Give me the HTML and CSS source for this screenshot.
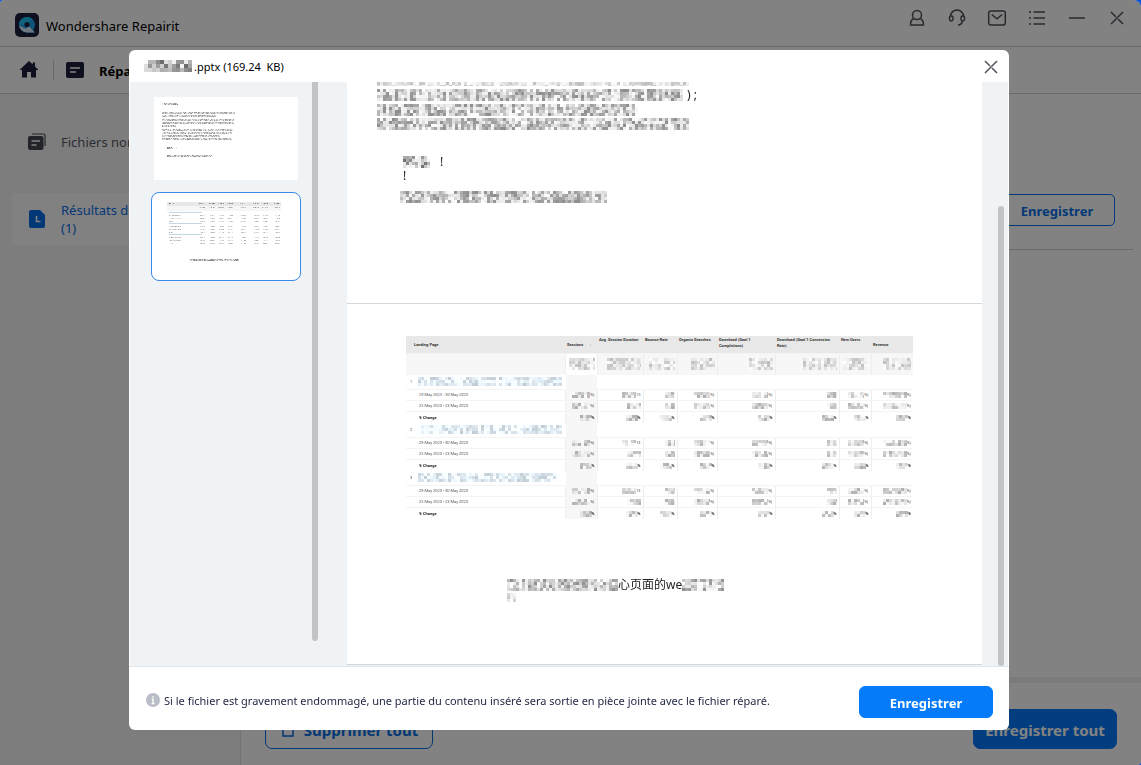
FILE: index.html
```html
<!DOCTYPE html>
<html lang="fr">
<head>
<meta charset="utf-8">
<meta name="viewport" content="width=device-width, initial-scale=1">
<title>Wondershare Repairit</title>
<link rel="stylesheet" href="styles.css">
</head>
<body>
<div class="app">
  <header class="titlebar">
    <svg class="logo" viewBox="0 0 24 24" aria-hidden="true">
      <rect width="24" height="24" rx="5" fill="#1d2040"/>
      <path d="M4 12a8 8 0 1 1 14.200 5l1.600 2.400H12A8 8 0 0 1 4 12z" fill="#1aa5e8"/>
      <path d="M4 12.500a8 8 0 0 0 8 6.900h7.800l-5.800-6.200-3 2.600z" fill="#d5ecff"/>
      <path d="M4 11.500a8 8 0 0 1 13-5.700L12 12z" fill="#1fc4f2"/>
      <circle cx="12" cy="11.500" r="2.600" fill="#1d2040"/>
    </svg>
    <span class="app-name">Wondershare Repairit</span>
    <div class="window-tools">
      <button class="tool" aria-label="Compte"><svg viewBox="0 0 20 20"><circle cx="10" cy="7" r="4.500"/><path d="M6.500 10.500C4.500 11.800 3.500 13.500 3.500 17h13c0-3.500-1-5.200-3-6.500"/></svg></button>
      <button class="tool" aria-label="Assistance"><svg viewBox="0 0 20 20"><path d="M3.500 9V8.500a6.500 6.500 0 0 1 13 0V9M15.500 13c-.5 2.500-2 4-4.500 4"/><rect x="2.500" y="8" width="3.500" height="5" rx="1.700"/><rect x="14" y="8" width="3.500" height="5" rx="1.700"/></svg></button>
      <button class="tool" aria-label="Messages"><svg viewBox="0 0 20 20"><rect x="1.700" y="3" width="16.600" height="14" rx="2"/><path d="M4.800 6.500 10 10.800l5.200-4.300"/></svg></button>
      <button class="tool" aria-label="Menu"><svg viewBox="0 0 20 20"><path d="M6.500 4H18M6.500 10H18M6.500 16H18M2 4h2M2 10h2M2 16h2"/></svg></button>
      <button class="tool" aria-label="Réduire"><svg viewBox="0 0 20 20"><path d="M2 10h16"/></svg></button>
      <button class="tool" aria-label="Fermer"><svg viewBox="0 0 20 20"><path d="m4 4 5 5M11 11l5 5M16 4 4 16"/></svg></button>
    </div>
  </header>

  <nav class="crumbs">
    <svg class="home" viewBox="0 0 20 20" aria-hidden="true"><path d="M10 1 .5 10H3v7.500h5V12h4v5.500h5V10h2.500L16 6.600V2.500h-2.300v2z"/></svg>
    <span class="crumb-rule"></span>
    <svg class="doc" viewBox="0 0 18 16" aria-hidden="true"><rect width="18" height="16" rx="2"/><path d="M4 6h10M4 10h6" stroke="#fff" stroke-width="1.500"/></svg>
    <strong class="crumb">Réparation de fichiers</strong>
  </nav>

  <div class="workspace">
    <aside class="sidebar">
      <a class="side-item" href="#">
        <svg class="side-icon" viewBox="0 0 18 18" aria-hidden="true"><path d="M4 1h11.500A1.500 1.500 0 0 1 17 2.500V13" fill="none" stroke="#444852" stroke-width="1.200"/><rect x="0" y="3" width="15.500" height="14" rx="2" fill="#444852"/><path d="M3.500 8h8.500M3.500 12h5" stroke="#fff" stroke-width="1.400"/></svg>
        <span>Fichiers non réparés</span>
      </a>
      <a class="side-item side-item-active" href="#">
        <svg class="side-icon" viewBox="0 0 18 20" aria-hidden="true"><path d="M3 1h9l5 5v11a2 2 0 0 1-2 2H3a2 2 0 0 1-2-2V3a2 2 0 0 1 2-2z" fill="#066fe8"/><path d="M8.500 7v5.500h4" fill="none" stroke="#fff" stroke-width="1.600"/></svg>
        <span>Résultats de réparation<br>(1)</span>
      </a>
    </aside>
    <main class="results">
      <section class="result-list">
        <div class="result-row"><button class="btn btn-outline">Enregistrer</button></div>
      </section>
      <footer class="actions">
        <button class="btn btn-outline btn-large btn-delete">
          <svg class="trash" viewBox="0 0 16 16" aria-hidden="true"><path d="M1 4h14M5 4V1h6v3M3 4v10h10V4"/></svg>Supprimer tout
        </button>
        <button class="btn btn-primary btn-large">Enregistrer tout</button>
      </footer>
    </main>
  </div>

  <div class="overlay">
    <section class="modal" role="dialog" aria-modal="true" aria-labelledby="file-name">
      <header class="modal-head">
        <h1 class="file-name" id="file-name"><canvas class="mosaic" width="48" height="12" data-cell="4" data-dark="100"></canvas>.pptx (169.24 &nbsp;KB)</h1>
        <button class="tool" aria-label="Fermer l'aperçu"><svg viewBox="0 0 20 20"><path d="m4 4 5 5M11 11l5 5M16 4 4 16"/></svg></button>
      </header>
      <div class="preview">
        <div class="thumbs">
          <button class="thumb" aria-label="Page 1"><canvas id="thumb-1" width="144" height="83"></canvas></button>
          <button class="thumb thumb-active" aria-label="Page 2"><canvas id="thumb-2" width="144" height="83"></canvas></button>
        </div>
        <div class="thumb-bar"></div>
        <div class="pages">
          <article class="page page-one">
            <div class="lines">
              <canvas class="mosaic" width="312" height="4" data-dark="190"></canvas>
              <div class="line"><canvas class="mosaic" width="306" height="12"></canvas><span class="tail">) ;</span></div>
              <canvas class="mosaic" width="261" height="12"></canvas>
              <canvas class="mosaic" width="312" height="12"></canvas>
            </div>
            <div class="note">
              <div class="line"><canvas class="mosaic" width="27" height="12" data-dark="110"></canvas><span class="bang">!</span></div>
              <div class="line"><span>!</span></div>
            </div>
            <div class="closing"><canvas class="mosaic" width="207" height="12"></canvas></div>
          </article>
          <article class="page page-two">
            <table class="stats">
              <colgroup><col class="c-page"><col class="c-sessions"><col class="c-avg"><col class="c-bounce"><col class="c-organic"><col class="c-goal"><col class="c-rate"><col class="c-new"><col class="c-revenue"></colgroup>
              <thead>
                <tr>
                  <th class="mid">Landing Page</th>
                  <th class="mid sort">Sessions <span>↓</span></th>
                  <th>Avg. Session Duration</th>
                  <th>Bounce Rate</th>
                  <th>Organic Searches</th>
                  <th>Download (Goal 1<br>Completions)</th>
                  <th>Download (Goal 1 Conversion<br>Rate)</th>
                  <th>New Users</th>
                  <th class="mid">Revenue</th>
                </tr>
              </thead>
              <tbody id="stats-body"></tbody>
            </table>
            <div class="caption">
              <canvas class="mosaic" width="111" height="12"></canvas><span>心页面的we</span><canvas class="mosaic" width="42" height="12"></canvas>
            </div>
            <canvas class="mosaic caption-tail" width="9" height="9" data-dark="190"></canvas>
          </article>
        </div>
        <div class="page-bar"></div>
      </div>
      <footer class="modal-foot">
        <svg class="info" viewBox="0 0 14 14" aria-hidden="true"><circle cx="7" cy="7" r="7" fill="#b9bdc7"/><path d="M7 3v1.600M5.800 6H7v4.500M5.500 10.500h3" stroke="#fff" stroke-width="1.300" fill="none"/></svg>
        <p class="hint">Si le fichier est gravement endommagé, une partie du contenu inséré sera sortie en pièce jointe avec le fichier réparé.</p>
        <button class="btn btn-primary btn-save">Enregistrer</button>
      </footer>
    </section>
  </div>
</div>
<script src="script.js"></script>
</body>
</html>
```

FILE: styles.css
```css
* { box-sizing: border-box; }
body {
  margin: 0;
  background: #0a55e0;
  color: #000;
  font-family: "Noto Sans", "Noto Sans CJK SC", sans-serif;
  font-size: 13px;
}
button { font-family: inherit; padding: 0; cursor: pointer; }
canvas { display: block; }

.app {
  position: relative;
  display: flex;
  flex-direction: column;
  min-height: 100vh;
  overflow: hidden;
  border-radius: 4px 8px 4px 0;
  background: #fff;
}

/* Title bar */
.titlebar {
  display: flex;
  align-items: center;
  height: 47px;
  padding: 4px 14px 0 15px;
  border-bottom: 1px solid #ced1da;
}
.logo { width: 24px; height: 24px; }
.app-name { margin-left: 7px; padding-top: 2px; font-size: 13px; }
.window-tools { display: flex; gap: 20px; margin: 0 0 14px auto; }
.tool {
  width: 20px;
  height: 20px;
  border: 0;
  background: none;
}
.tool svg {
  display: block;
  width: 20px;
  height: 20px;
  fill: none;
  stroke: #50535c;
  stroke-width: 1.5;
}

/* Navigation */
.crumbs {
  display: flex;
  align-items: center;
  height: 47px;
  padding-left: 19px;
  border-bottom: 1px solid #ced1da;
}
.home { width: 20px; height: 20px; fill: #1d2040; }
.crumb-rule { width: 1px; height: 20px; margin: 0 12px 0 14px; background: #ced1da; }
.doc { width: 18px; height: 16px; fill: #1d2040; }
.crumb { margin-left: 15px; padding-top: 2px; font-size: 13px; }

/* Workspace */
.workspace { display: flex; flex: 1; }
.sidebar {
  width: 241px;
  padding: 22px 12px;
  border-right: 1px solid #dfe1e8;
  background: #f5f5f8;
}
.side-item {
  display: flex;
  align-items: center;
  gap: 15px;
  height: 52px;
  margin-bottom: 25px;
  padding-left: 16px;
  border-radius: 4px;
  color: #585b65;
  line-height: 18px;
  text-decoration: none;
  white-space: nowrap;
}
.side-item-active { background: #fdfdff; color: #066fe8; }
.side-icon { width: 18px; height: 20px; }
.results { display: flex; flex: 1; flex-direction: column; }
.result-list { flex: 1; padding: 77px 8px 0 24px; }
.result-row {
  display: flex;
  align-items: center;
  justify-content: flex-end;
  height: 79px;
  padding-right: 18px;
  border-bottom: 1px solid #ced1da;
}
.actions {
  display: flex;
  justify-content: space-between;
  padding: 26px 24px 16px;
  border-top: 6px solid #f2f2f8;
}

/* Buttons */
.btn {
  width: 116px;
  height: 32px;
  padding-top: 2px;
  border: 1px solid #066fe8;
  border-radius: 5px;
  font-size: 13px;
  font-weight: 700;
}
.btn-outline { background: transparent; color: #066fe8; }
.btn-primary { border-color: #057bfa; background: #057bfa; color: #fff; }
.btn-large { width: 144px; height: 40px; border-radius: 7px; font-size: 15px; }
.btn-delete { display: flex; align-items: center; justify-content: center; gap: 8px; width: 168px; }
.trash { width: 16px; height: 16px; fill: none; stroke: #066fe8; stroke-width: 1.5; }
.btn-save { width: 134px; margin-left: auto; border-radius: 6px; }

/* Preview dialog */
.overlay {
  position: absolute;
  inset: 0;
  display: flex;
  padding: 50px 132px 35px 129px;
  background: rgba(0, 0, 0, 0.49);
}
.modal {
  display: flex;
  flex: 1;
  flex-direction: column;
  min-width: 0;
  overflow: hidden;
  border-radius: 6px;
  background: #fff;
}
.modal-head {
  display: flex;
  flex: none;
  align-items: center;
  justify-content: space-between;
  height: 32px;
  padding: 2px 8px 0 15px;
}
.file-name { display: flex; align-items: center; gap: 2px; margin: 0; padding-bottom: 2px; font-size: 11px; font-weight: 400; }
.preview {
  display: flex;
  flex: 1;
  min-height: 0;
  margin: 0 1px;
  background: #eff3f6;
}
.thumbs { display: flex; flex-direction: column; gap: 9px; padding: 12px 11px 0 21px; }
.thumb {
  padding: 2px;
  border: 1px solid transparent;
  border-radius: 8px;
  background: none;
}
.thumb-active { border-color: #3b8ae8; background: #fff; }
.thumb canvas { background: #fff; }
.thumb-bar { width: 6px; margin-bottom: 25px; border-radius: 0 0 3px 3px; background: #c1c4c6; }
.pages { flex: 1; min-width: 0; margin-left: 29px; overflow: hidden; }
.page { border-bottom: 1px solid #d4d7d9; background: #fff; color: #222; }
.page-one { height: 222px; padding-left: 30px; }
.page-two { height: 361px; padding: 32px 0 0 59px; }
.lines { display: flex; flex-direction: column; align-items: flex-start; gap: 2px; }
.line { display: flex; align-items: center; font-size: 12px; line-height: 14px; }
.tail { margin-left: 4px; }
.note { padding: 25px 0 0 26px; }
.bang { margin-left: 10px; }
.closing { padding: 8px 0 0 23px; }
.caption { display: flex; align-items: center; margin-top: 58px; padding-left: 101px; font-size: 12px; line-height: 16px; }
.caption-tail { margin-left: 101px; }
.page-bar { width: 6px; margin: 124px 4px 0 16px; border-radius: 3px; background: #c1c4c6; }

.modal-foot {
  display: flex;
  flex: none;
  align-items: center;
  height: 64px;
  padding: 6px 16px 0 17px;
  border-top: 1px solid #e3e6e8;
}
.info { flex: none; width: 14px; height: 14px; margin: 0 4px 4px 0; }
.hint { margin: 0 0 3px; color: #1f2440; font-size: 11px; }

.stats {
  width: 507px;
  border-collapse: collapse;
  table-layout: fixed;
  font-family: Roboto, sans-serif;
  font-size: 4px;
  line-height: 6px;
}
.c-page { width: 159px; }
.c-sessions { width: 32px; }
.c-avg { width: 46px; }
.c-bounce { width: 34px; }
.c-organic { width: 40px; }
.c-goal { width: 58px; }
.c-rate { width: 64px; }
.c-new { width: 32px; }
.c-revenue { width: 42px; }
.stats th, .stats td { height: 11px; padding: 0 2px; }
.stats th {
  height: 17px;
  padding-top: 1px;
  background: #e8e8e8;
  color: #333;
  font-weight: 700;
  text-align: left;
  vertical-align: top;
  white-space: nowrap;
}
.stats th.mid { vertical-align: middle; }
.stats th:first-child { padding-left: 8px; }
.stats th.sort span { margin-left: 5px; }
.stats td { border-left: 1px solid #eee; border-top: 1px solid #f4f4f4; color: #555; }
.stats td:first-child { padding-left: 13px; border-left: 0; }
.stats td:nth-child(2) { background: #f7f7f7; }
.stats .total td { height: 22px; background: #f7f7f7; }
.stats .total td:nth-child(2) { background: #fff; }
.stats .group td { height: 14px; border-top: 0; border-left-color: #fff; }
.stats .group td:first-child { padding-left: 4px; }
.stats .change td { height: 12px; padding-top: 1px; font-weight: 700; color: #222; }
.cell { display: flex; align-items: center; justify-content: flex-end; }
.group-cell { display: flex; align-items: center; gap: 6px; }
```

FILE: script.js
```js
let seed = 7;
function random() {
  seed = (seed * 16807) % 2147483647;
  return seed / 2147483647;
}

// Fills a canvas with the blocky pattern that hides private text.
function paintMosaic(canvas) {
  const ctx = canvas.getContext("2d");
  const cell = Number(canvas.dataset.cell || 3);
  const dark = Number(canvas.dataset.dark || 140);
  const blue = canvas.dataset.tone === "blue";
  for (let x = 0; x < canvas.width; x += cell) {
    const gap = random() < 0.14;
    for (let y = 0; y < canvas.height; y += cell) {
      const level = Math.round(dark + (255 - dark) * (gap ? 0.7 + random() * 0.3 : random()));
      ctx.fillStyle = blue
        ? `rgb(${level}, ${Math.min(255, level + 10)}, ${Math.min(255, level + 18)})`
        : `rgb(${level}, ${level}, ${level})`;
      ctx.fillRect(x, y, cell, cell);
    }
  }
}

function mosaic(width, height, cell, dark, tone) {
  return `<canvas class="mosaic" width="${width}" height="${height}" data-cell="${cell}" data-dark="${dark}" data-tone="${tone || ""}"></canvas>`;
}

const labels = ["29 May 2023 - 30 May 2023", "22 May 2023 - 23 May 2023", "% Change"];
const widths = [22, 18, 14, 20, 20, 14, 20, 28];
const endings = [
  ["%)", "13", "", "%)", "%)", "", "%)", "%)"],
  ["%)", "", "", "%)", "%)", "", "%)", "%)"],
  ["%", "%", "%", "%", "%", "%", "%", "%"]
];

let html = `<tr class="total"><td></td>${[26, 34, 26, 24, 24, 34, 26, 28]
  .map((w) => `<td><div class="cell">${mosaic(w, 12, 3, 190)}</div></td>`).join("")}</tr>`;
for (let group = 1; group <= 3; group++) {
  html += `<tr class="group"><td><div class="group-cell"><span>${group}</span>${mosaic(144, 9, 3, 195, "blue")}</div></td>${"<td></td>".repeat(8)}</tr>`;
  labels.forEach((label, row) => {
    const cells = widths.map((w, i) => {
      const width = row === 2 ? 12 : w - 4;
      return `<td><div class="cell">${mosaic(width, 6, 3, 175)}<span>${endings[row][i]}</span></div></td>`;
    }).join("");
    html += `<tr class="${row === 2 ? "change" : ""}"><td>${label}</td>${cells}</tr>`;
  });
}
document.getElementById("stats-body").innerHTML = html;
document.querySelectorAll(".mosaic").forEach(paintMosaic);

// Draws a row of tiny marks standing for a line of text in a thumbnail.
function tinyLine(ctx, x, y, width, height, dark) {
  for (let i = 0; i < width; i++) {
    for (let j = 0; j < height; j++) {
      const level = Math.round(dark + (250 - dark) * random());
      ctx.fillStyle = `rgb(${level}, ${level}, ${level})`;
      ctx.fillRect(x + i, y + j, 1, 1);
    }
  }
}

const first = document.getElementById("thumb-1").getContext("2d");
tinyLine(first, 8, 6, 16, 2, 120);
[73, 54, 72, 72, 14, 71, 70, 58, 70].forEach((w, i) => {
  tinyLine(first, 8, 15 + Math.round(i * 3.3), w, 2, 145);
});
tinyLine(first, 13, 50, 6, 2, 110);
tinyLine(first, 22, 50, 1, 2, 140);
tinyLine(first, 13, 58, 45, 2, 130);

const second = document.getElementById("thumb-2").getContext("2d");
const columns = [30, 40, 49, 58, 71, 84, 93, 105];
second.fillStyle = "#e8e8e8";
second.fillRect(13, 7, 114, 4);
second.fillStyle = "#f6f6f6";
second.fillRect(13, 11, 114, 5);
tinyLine(second, 14, 8, 6, 1, 110);
columns.forEach((x) => {
  tinyLine(second, x + 15, 8, 6, 1, 110);
  tinyLine(second, x + 15, 12, 6, 1, 150);
});
for (let group = 0; group < 3; group++) {
  const top = 17 + group * 11;
  second.fillStyle = "#c3d8e6";
  second.fillRect(15, top, 33, 1);
  for (let row = 0; row < 3; row++) {
    const y = top + 3 + row * 3;
    tinyLine(second, 15, y, row === 2 ? 4 : 12, 1, 170);
    columns.forEach((x) => tinyLine(second, x + 16, y, 5, 1, 175));
  }
}
tinyLine(second, 36, 64, 49, 2, 120);
```
